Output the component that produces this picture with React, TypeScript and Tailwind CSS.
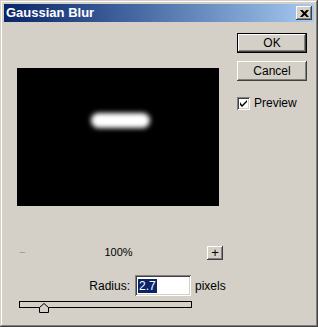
import React from 'react'

const raised =
  'shadow-[inset_-1px_-1px_#404040,inset_1px_1px_#ffffff,inset_-2px_-2px_#808080,inset_2px_2px_#d4d0c8]'
const sunken =
  'shadow-[inset_1px_1px_#808080,inset_-1px_-1px_#ffffff,inset_2px_2px_#404040,inset_-2px_-2px_#d4d0c8]'

const Button = ({ label, isDefault }: { label: string; isDefault?: boolean }) =>
  isDefault ? (
    <div className="h-[20px] w-[70px] border border-black">
      <div className={`flex h-full w-full items-center justify-center bg-[#d4d0c8] text-[12px] text-black ${raised}`}>
        {label}
      </div>
    </div>
  ) : (
    <div className={`flex h-[20px] w-[70px] items-center justify-center bg-[#d4d0c8] text-[12px] text-black ${raised}`}>
      {label}
    </div>
  )

const App = () => {
  return (
    <div
      className="flex h-[327px] w-[318px] flex-col bg-[#d4d0c8] p-[4px] shadow-[inset_-1px_-1px_#404040,inset_1px_1px_#d4d0c8,inset_-2px_-2px_#808080,inset_2px_2px_#ffffff]"
      style={{ fontFamily: '"Liberation Sans", Arial, sans-serif' }}
    >
      {/* title bar */}
      <div className="flex h-[18px] items-center bg-gradient-to-r from-[#0a246a] to-[#a6caf0] pl-[2px] pr-[2px]">
        <span className="text-[13px] font-bold text-white">Gaussian Blur</span>
        <div className={`ml-auto flex h-[14px] w-[16px] items-center justify-center bg-[#d4d0c8] ${raised}`}>
          <svg width="9" height="7" viewBox="0 0 9 7">
            <path d="M0 0h2.5l2 2 2-2H9L6 3.5 9 7H6.5l-2-2-2 2H0l3-3.5z" fill="black" />
          </svg>
        </div>
      </div>

      <div className="flex">
        {/* left column */}
        <div className="flex flex-col pl-[13px] pt-[46px]">
          <div className="flex h-[138px] w-[202px] bg-black pl-[74px] pt-[45px]">
            <div className="h-[15px] w-[59px] rounded-full bg-white blur-[2.5px]" />
          </div>

          <div className="mt-[40px] flex h-[13px] w-[206px] items-center text-[11px]">
            <span className="ml-[2px] text-[#9a9890]">−</span>
            <span className="ml-[79px] text-black">100%</span>
            <div className={`ml-auto flex h-[14px] w-[16px] items-center justify-center bg-[#d4d0c8] text-[13px] leading-none ${raised}`}>
              +
            </div>
          </div>

          <div className="mt-[16px] flex items-center text-[12px] text-black">
            <span className="w-[113px] text-right">Radius:</span>
            <div className={`ml-[5px] flex h-[21px] w-[56px] items-center bg-white pl-[3px] ${sunken}`}>
              <span className="bg-[#0a246a] px-[1px] text-white leading-[14px]">2.7</span>
            </div>
            <span className="ml-[4px]">pixels</span>
          </div>

          <div className="relative mt-[5px] ml-[2px] h-[7px] w-[173px] border border-black bg-[#d4d0c8]">
            <svg className="absolute left-[19px] top-[1px]" width="10" height="10" viewBox="0 0 10 10">
              <path d="M0.5 4.5 L5 0.5 L9.5 4.5 L9.5 9.5 L0.5 9.5 Z" fill="#d4d0c8" stroke="black" />
            </svg>
          </div>
        </div>

        {/* right column */}
        <div className="ml-auto mr-[7px] flex flex-col pt-[11px]">
          <Button label="OK" isDefault />
          <div className="mt-[8px]">
            <Button label="Cancel" />
          </div>
          <div className="mt-[13px] flex items-center text-[12px] text-black">
            <div className={`flex h-[13px] w-[13px] items-center justify-center bg-white ${sunken}`}>
              <svg width="7" height="7" viewBox="0 0 7 7">
                <path d="M0 2v3l2 2L7 2V0L2 5z" fill="black" />
              </svg>
            </div>
            <span className="ml-[4px]">Preview</span>
          </div>
        </div>
      </div>
    </div>
  )
}

export default App
